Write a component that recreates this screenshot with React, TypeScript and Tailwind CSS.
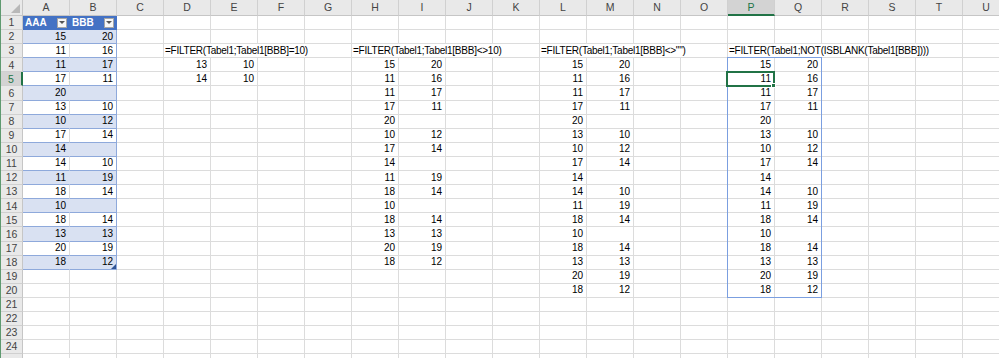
import React from 'react';

const COLS = 'ABCDEFGHIJKLMNOPQRSTU'.split('');
const ROWS = Array.from({ length: 24 }, (_, i) => i + 1);
const COL_W = 47;
const ROW_H = 14.1;

type Row = [number, number | null];

const table: Row[] = [
  [15, 20], [11, 16], [11, 17], [17, 11], [20, null], [13, 10], [10, 12], [17, 14], [14, null],
  [14, 10], [11, 19], [18, 14], [10, null], [18, 14], [13, 13], [20, 19], [18, 12],
];

const values: Record<string, number | null> = {};
table.forEach((r, i) => {
  values[`A${i + 2}`] = r[0];
  values[`B${i + 2}`] = r[1];
});
table.filter((r) => r[1] === 10).forEach((r, i) => {
  values[`D${i + 4}`] = r[0];
  values[`E${i + 4}`] = r[1];
});
table.filter((r) => r[1] !== 10).forEach((r, i) => {
  values[`H${i + 4}`] = r[0];
  values[`I${i + 4}`] = r[1];
});
table.forEach((r, i) => {
  values[`L${i + 4}`] = r[0];
  values[`M${i + 4}`] = r[1];
  values[`P${i + 4}`] = r[0];
  values[`Q${i + 4}`] = r[1];
});

// formula text in row 3, spills over neighbouring empty cells
const formulas: Record<string, { text: string; span: number }> = {
  D: { text: '=FILTER(Tabel1;Tabel1[BBB]=10)', span: 4 },
  H: { text: '=FILTER(Tabel1;Tabel1[BBB]<>10)', span: 4 },
  L: { text: '=FILTER(Tabel1;Tabel1[BBB]<>"")', span: 4 },
  P: { text: '=FILTER(Tabel1;NOT(ISBLANK(Tabel1[BBB])))', span: 5 },
};

function FilterButton() {
  return (
    <span className="flex h-[10px] w-[10px] items-center justify-center border border-[#a6a6a6] bg-[#f7f7f7]">
      <span className="h-0 w-0 border-x-[3px] border-t-[3px] border-x-transparent border-t-[#555]" />
    </span>
  );
}

function ColumnHeaders() {
  return (
    <div className="flex h-[16px] text-[10.5px]">
      <div className="relative h-full w-[22px] shrink-0 border-b border-r border-[#c6c6c6] bg-[#e9e9e9]">
        <span className="absolute bottom-[2px] right-[2px] h-0 w-0 border-b-[9px] border-l-[9px] border-b-[#b8b8b8] border-l-transparent" />
      </div>
      {COLS.map((c) => {
        const sel = c === 'P';
        return (
          <div
            key={c}
            className={
              'flex h-full w-[47px] shrink-0 items-center justify-center border-r border-[#d0d0d0] ' +
              (sel
                ? 'border-b-2 border-b-[#217346] bg-[#d3d3d3] text-[#217346]'
                : 'border-b border-b-[#c6c6c6] bg-[#e9e9e9] text-[#444]')
            }
          >
            {c}
          </div>
        );
      })}
    </div>
  );
}

function SheetRow({ r }: { r: number }) {
  const cells: React.ReactNode[] = [];
  let i = 0;
  while (i < COLS.length) {
    const c = COLS[i];
    const key = `${c}${r}`;
    if (r === 3 && formulas[c]) {
      const f = formulas[c];
      cells.push(
        <div
          key={key}
          className="flex h-full shrink-0 items-center whitespace-nowrap border-b border-r border-[#dcdcdc] pl-[1px] tracking-[-0.25px]"
          style={{ width: COL_W * f.span }}
        >
          {f.text}
        </div>,
      );
      i += f.span;
      continue;
    }
    const inTable = (c === 'A' || c === 'B') && r <= 18;
    let cls = 'flex h-full w-[47px] shrink-0 items-center justify-end pr-[3px] border-b border-r ';
    let content: React.ReactNode = values[key] ?? '';
    if (inTable && r === 1) {
      cls =
        'flex h-full w-[47px] shrink-0 items-center justify-between pl-[2px] pr-[2px] border-b border-r border-[#4472c4] bg-[#4472c4] font-bold text-white';
      content = (
        <>
          <span>{c === 'A' ? 'AAA' : 'BBB'}</span>
          <FilterButton />
        </>
      );
    } else if (inTable) {
      const band = r % 2 === 0;
      cls += 'border-b-[#8ea9db] ';
      if (band) cls += 'bg-[#d9e1f2] ';
      if (c === 'B') cls += 'relative border-r-[#8ea9db] ';
      else cls += band ? 'border-r-[#d9e1f2] ' : 'border-r-[#dcdcdc] ';
      if (c === 'B' && r === 18) {
        content = (
          <>
            {content}
            <span className="absolute bottom-0 right-0 h-0 w-0 border-b-[5px] border-l-[5px] border-b-[#2f5597] border-l-transparent" />
          </>
        );
      }
    } else {
      cls += 'border-[#dcdcdc] ';
    }
    cells.push(
      <div key={key} className={cls}>
        {content}
      </div>,
    );
    i += 1;
  }
  const sel = r === 5;
  return (
    <div className="flex" style={{ height: ROW_H }}>
      <div
        className={
          'flex h-full w-[22px] shrink-0 items-center justify-center border-b border-b-[#d0d0d0] text-[10.5px] ' +
          (sel
            ? 'border-r-2 border-r-[#217346] bg-[#d3d3d3] text-[#217346]'
            : 'border-r border-r-[#c6c6c6] bg-[#e9e9e9] text-[#444]')
        }
      >
        {r}
      </div>
      {cells}
    </div>
  );
}

export default function App() {
  return (
    <div
      className="relative h-[358px] w-[999px] overflow-hidden border-l border-l-[#5f9a70] bg-white text-[10px] leading-none text-black"
      style={{ fontFamily: '"Liberation Sans", Arial, sans-serif' }}
    >
      <ColumnHeaders />
      <div className="relative">
        {ROWS.map((r) => (
          <SheetRow key={r} r={r} />
        ))}
        <div className="flex h-[14px]">
          <div className="h-full w-[22px] shrink-0 border-r border-[#c6c6c6] bg-[#e9e9e9]" />
          {COLS.map((c) => (
            <div key={c} className="h-full w-[47px] shrink-0 border-r border-[#dcdcdc]" />
          ))}
        </div>
        {/* spill range P4:Q20 */}
        <div
          className="pointer-events-none absolute border border-[#7b9fe0]"
          style={{ left: 21 + COL_W * 15, top: ROW_H * 3 - 1, width: COL_W * 2 + 1, height: ROW_H * 17 + 1 }}
        />
        {/* active cell P5 */}
        <div
          className="pointer-events-none absolute border-2 border-[#217346]"
          style={{ left: 20 + COL_W * 15, top: ROW_H * 4 - 1.5, width: COL_W + 2, height: ROW_H + 2 }}
        >
          <span className="absolute -bottom-[3px] -right-[3px] h-[5px] w-[5px] border border-white bg-[#217346]" />
        </div>
      </div>
    </div>
  );
}
